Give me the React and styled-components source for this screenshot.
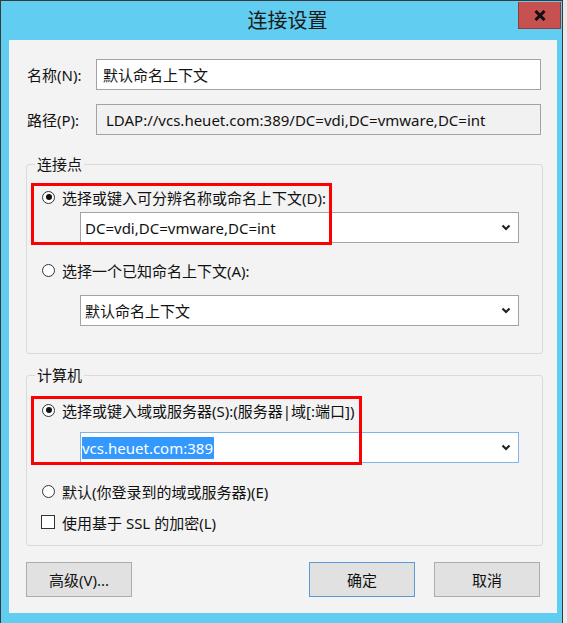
import React from "react"
import styled, { createGlobalStyle } from "styled-components"

const GlobalStyle = createGlobalStyle`
    html, body {
        margin: 0;
        padding: 0;
        background: #e9e9e9;
    }
    * {
        box-sizing: border-box;
    }
`

const Window = styled.div`
    width: 563px;
    height: 623px;
    overflow: hidden;
    background: #61cdf0;
    border: 1px solid #3a3a3a;
    border-bottom: none;
    padding-bottom: 10px;
    font-family: "Noto Sans", "Noto Sans CJK SC", sans-serif;
    font-size: 15px;
    color: #111;
`

const TitleBar = styled.div`
    height: 39px;
    display: flex;
    align-items: flex-start;
`

const Title = styled.div`
    flex: 1;
    padding-left: 56px;
    text-align: center;
    font-family: "Noto Sans CJK SC", sans-serif;
    font-size: 20px;
    line-height: 38px;
    color: #1a1a1a;
`

const CloseButton = styled.div`
    width: 43px;
    height: 27px;
    margin: 1px 1px 0 0;
    background: #c75050;
    border: 1px solid #8f3b3b;
    border-top: none;
    display: flex;
    align-items: center;
    justify-content: center;
`

const Client = styled.div`
    margin: 0 5px 0 8px;
    height: 573px;
    background: #f3f3f3;
    padding: 19px 16px 0 17px;
    display: flex;
    flex-direction: column;
`

const FieldRow = styled.div`
    display: flex;
    align-items: center;
    margin-bottom: ${(p) => p.$gap || 0}px;
`

const FieldLabel = styled.span`
    width: 70px;
    padding-left: 1px;
    white-space: nowrap;
`

const TextBox = styled.div`
    flex: 1;
    height: 31px;
    display: flex;
    align-items: center;
    padding: 0 ${(p) => (p.$readOnly ? 9 : 6)}px;
    background: ${(p) => (p.$readOnly ? "#f1f1f1" : "#ffffff")};
    border: 1px solid #a3a3a3;
    white-space: nowrap;
`

const Group = styled.fieldset`
    margin: ${(p) => p.$top}px -2px 0 0;
    padding: 0 0 0 8px;
    min-width: 0;
    border: 1px solid #dadada;
    border-radius: 3px;
`

const Legend = styled.legend`
    padding: 0 2px;
    line-height: 20px;
    font-family: "Noto Sans CJK SC", sans-serif;
    font-size: 15px;
`

const GroupBody = styled.div`
    padding: ${(p) => p.$top}px 23px ${(p) => p.$bottom}px 7px;
    display: flex;
    flex-direction: column;
`

const OptionBlock = styled.div`
    position: relative;
    display: flex;
    flex-direction: column;
    margin-bottom: ${(p) => p.$gap || 0}px;
`

const Annotation = styled.div`
    position: absolute;
    left: -11px;
    top: -4px;
    bottom: -2px;
    width: ${(p) => p.$width}px;
    border: 3px solid #ff0000;
    pointer-events: none;
`

const OptionRow = styled.div`
    display: flex;
    align-items: center;
    gap: 7px;
    height: 20px;
    margin-bottom: ${(p) => p.$gap || 0}px;
    white-space: nowrap;
`

const Radio = styled.span`
    width: 13px;
    height: 13px;
    border-radius: 50%;
    border: 1px solid #333;
    background: #fff;
    display: flex;
    align-items: center;
    justify-content: center;
    flex-shrink: 0;

    &::after {
        content: "";
        width: 6px;
        height: 6px;
        border-radius: 50%;
        background: ${(p) => (p.$checked ? "#111" : "transparent")};
    }
`

const Checkbox = styled.span`
    width: 14px;
    height: 14px;
    margin-left: -1px;
    border: 1px solid #333;
    background: #fff;
    flex-shrink: 0;
`

const Combo = styled.div`
    height: 31px;
    margin: 0 0 ${(p) => p.$gap || 0}px 38px;
    display: flex;
    align-items: center;
    padding: 0 7px 0 ${(p) => (p.$focused ? 1 : 4)}px;
    background: #fff;
    border: 1px solid ${(p) => (p.$focused ? "#7eb4ea" : "#a3a3a3")};
    white-space: nowrap;
`

const ComboText = styled.span`
    flex: 1;
`

const Selected = styled.span`
    background: #3399ff;
    color: #fff;
    padding: 1px 1px 1px 0;
`

const ButtonRow = styled.div`
    display: flex;
    justify-content: space-between;
    margin: 16px 1px 0 0;
`

const ButtonGroup = styled.div`
    display: flex;
    gap: 19px;
`

const Button = styled.div`
    width: 106px;
    height: 35px;
    display: flex;
    align-items: center;
    justify-content: center;
    background: #e1e1e1;
    border: 1px solid ${(p) => (p.$default ? "#5b9bd5" : "#acacac")};
    font-size: 15px;
`

const Chevron = () => (
    <svg width="10" height="7" viewBox="0 0 10 7">
        <path d="M1.5 1.5 L5 5 L8.5 1.5" fill="none" stroke="#222" strokeWidth="2.2" />
    </svg>
)

const App = () => {
    return (
        <>
            <GlobalStyle />
            <Window>
                <TitleBar>
                    <Title>连接设置</Title>
                    <CloseButton>
                        <svg width="12" height="11" viewBox="0 0 12 11">
                            <path d="M1.5 1 L10.5 10 M10.5 1 L1.5 10" stroke="#111" strokeWidth="3" />
                        </svg>
                    </CloseButton>
                </TitleBar>
                <Client>
                    <FieldRow $gap={14}>
                        <FieldLabel>名称(N):</FieldLabel>
                        <TextBox>默认命名上下文</TextBox>
                    </FieldRow>
                    <FieldRow>
                        <FieldLabel>路径(P):</FieldLabel>
                        <TextBox $readOnly>LDAP://vcs.heuet.com:389/DC=vdi,DC=vmware,DC=int</TextBox>
                    </FieldRow>

                    <Group $top={19}>
                        <Legend>连接点</Legend>
                        <GroupBody $top={13} $bottom={27}>
                            <OptionBlock $gap={17}>
                                <Annotation $width={301} />
                                <OptionRow $gap={5}>
                                    <Radio $checked />
                                    选择或键入可分辨名称或命名上下文(D):
                                </OptionRow>
                                <Combo>
                                    <ComboText>DC=vdi,DC=vmware,DC=int</ComboText>
                                    <Chevron />
                                </Combo>
                            </OptionBlock>
                            <OptionRow $gap={15}>
                                <Radio />
                                选择一个已知命名上下文(A):
                            </OptionRow>
                            <Combo>
                                <ComboText>默认命名上下文</ComboText>
                                <Chevron />
                            </Combo>
                        </GroupBody>
                    </Group>

                    <Group $top={11}>
                        <Legend>计算机</Legend>
                        <GroupBody $top={15} $bottom={13}>
                            <OptionBlock $gap={18}>
                                <Annotation $width={331} />
                                <OptionRow $gap={12}>
                                    <Radio $checked />
                                    选择或键入域或服务器(S):(服务器|域[:端口])
                                </OptionRow>
                                <Combo $focused>
                                    <ComboText>
                                        <Selected>vcs.heuet.com:389</Selected>
                                    </ComboText>
                                    <Chevron />
                                </Combo>
                            </OptionBlock>
                            <OptionRow $gap={11}>
                                <Radio />
                                默认(你登录到的域或服务器)(E)
                            </OptionRow>
                            <OptionRow>
                                <Checkbox />
                                使用基于 SSL 的加密(L)
                            </OptionRow>
                        </GroupBody>
                    </Group>

                    <ButtonRow>
                        <Button>高级(V)...</Button>
                        <ButtonGroup>
                            <Button $default>确定</Button>
                            <Button>取消</Button>
                        </ButtonGroup>
                    </ButtonRow>
                </Client>
            </Window>
        </>
    )
}

export default App
